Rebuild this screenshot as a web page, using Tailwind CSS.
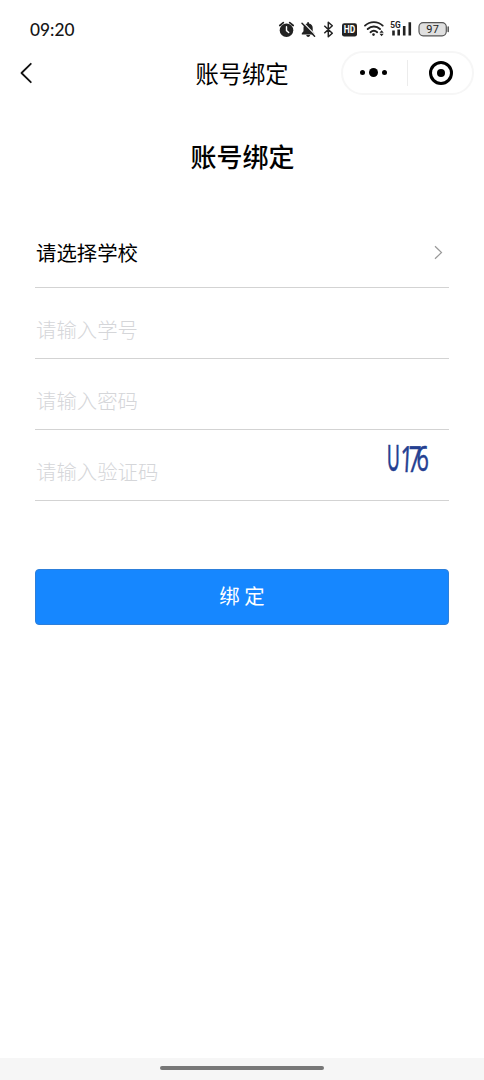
<!DOCTYPE html>
<html lang="zh-CN">
<head>
  <meta charset="UTF-8" />
  <meta name="viewport" content="width=device-width, initial-scale=1.0" />
  <title>账号绑定</title>
  <script src="https://cdn.jsdelivr.net/npm/@tailwindcss/browser@4"></script>
</head>
<body class="bg-white text-black font-['Noto_Sans_CJK_SC',sans-serif]">
  <div class="w-[484px] h-[1080px] flex flex-col overflow-hidden">

    <!-- Status bar -->
    <div class="h-[50px] pt-2 pl-[30px] pr-[34px] flex items-center justify-between shrink-0">
      <span class="pt-[2px] font-[Lato,sans-serif] font-medium text-[17.300px] leading-none text-[#151515]">09:20</span>
      <svg class="w-[172px] h-6" viewBox="278 17 172 24" fill="none">
        <!-- alarm -->
        <circle cx="286.500" cy="30.300" r="6.800" fill="#222" />
        <path d="M279.800 25.500l3.500-2.900M293.200 25.500l-3.500-2.900" stroke="#222" stroke-width="1.700" stroke-linecap="round" />
        <path d="M286.500 26.800v3.800l2.200 1.900" stroke="#fff" stroke-width="1.400" stroke-linecap="round" />
        <!-- muted bell -->
        <path d="M301.800 34.500v-1.200l1.700-2v-3.500c0-2.600 1.600-4.100 3.700-4.400v-1.200h1.800v1.200c2.200.4 3.700 2 3.700 4.400v3.500l1.700 2v1.200zM306.200 35h4c-.3 1.300-1 2-2 2s-1.700-.7-2-2z" fill="#222" />
        <path d="M303.100 22.500l12.500 12.700" stroke="#fff" stroke-width="1.100" />
        <path d="M302 23.200l12.600 13" stroke="#222" stroke-width="1.500" stroke-linecap="round" />
        <!-- bluetooth -->
        <path d="M324.300 25.700l8 7.600-4 3.500V22.300l4 3.500-8 7.400" stroke="#222" stroke-width="1.500" stroke-linejoin="round" />
        <!-- HD -->
        <rect x="342" y="23.300" width="15" height="13.200" rx="2.200" fill="#222" />
        <text x="349.500" y="33.400" text-anchor="middle" textLength="11.500" lengthAdjust="spacingAndGlyphs" font-family="Roboto" font-weight="700" font-size="10" fill="#fff">HD</text>
        <!-- wifi -->
        <path d="M365 25.600c5-4.700 12.700-4.700 17.700 0M367.700 29c3.600-3.300 8.800-3.300 12.300 0M370.500 32.200c2-1.800 4.700-1.800 6.700 0" stroke="#222" stroke-width="1.900" stroke-linecap="round" />
        <circle cx="373.500" cy="34.600" r="1.300" fill="#222" />
        <path d="M379.500 32.700l2.100-2.500 2.100 2.500zM379.500 33.800l2.100 2.500 2.100-2.500z" fill="#222" />
        <!-- signal -->
        <text x="390.300" y="28.200" textLength="10.500" lengthAdjust="spacingAndGlyphs" font-family="Roboto" font-weight="700" font-size="8.500" fill="#222">5G</text>
        <path d="M393.500 30.500v5M398.700 29.500v6M404.200 26v9.500M409.800 22.300v13.200" stroke="#222" stroke-width="2.600" />
        <!-- battery -->
        <rect x="419" y="22.600" width="27.300" height="13.200" rx="4.200" fill="#e0e0e0" stroke="#555" stroke-width="1.200" />
        <path d="M448.200 27v4.600" stroke="#555" stroke-width="1.500" stroke-linecap="round" />
        <text x="432.600" y="33.200" text-anchor="middle" textLength="12.500" font-family="Roboto" font-size="11" fill="#222">97</text>
      </svg>
    </div>

    <!-- Nav bar -->
    <div class="h-[46px] grid grid-cols-[1fr_auto_1fr] items-center pl-5 pr-[10px] shrink-0">
      <svg class="w-[14px] h-[22px]" viewBox="0 0 14 22" fill="none" stroke="#111" stroke-width="1.800" stroke-linecap="round" stroke-linejoin="round">
        <path d="M10.800 1.800L1.500 11l9.300 9.200" />
      </svg>
      <h1 class="text-[23.300px] leading-none pt-px -ml-[9px] pr-[1px]">账号绑定</h1>
      <div class="justify-self-end w-[133px] h-[44px] -mt-px rounded-full border-2 border-[#f6f6f6] flex items-center">
        <div class="w-[64px] pr-[3px] flex items-center justify-center gap-1">
          <i class="size-[5px] rounded-full bg-black"></i>
          <i class="size-[9px] rounded-full bg-black"></i>
          <i class="size-[5px] rounded-full bg-black"></i>
        </div>
        <div class="w-px h-[26px] bg-[#ececec]"></div>
        <div class="flex-1 flex items-center justify-center pl-px">
          <div class="size-6 rounded-full border-[3px] border-black flex items-center justify-center">
            <i class="size-2 rounded-full bg-black"></i>
          </div>
        </div>
      </div>
    </div>

    <!-- Form -->
    <main class="flex-1 px-[35px]">
      <h2 class="mt-[47px] pl-px text-[26px] leading-[26px] font-medium text-center">账号绑定</h2>

      <div class="mt-12 h-[71px] pl-px border-b border-[#d3d3d3] flex items-center justify-between pr-[5px]">
        <span class="text-[20.400px]">请选择学校</span>
        <svg class="w-[11px] h-[15px]" viewBox="0 0 11 15" fill="none" stroke="#999" stroke-width="1.200">
          <path d="M2 1.200l6.500 6.300L2 13.800" />
        </svg>
      </div>
      <div class="h-[71px] pt-3 pl-px border-b border-[#d3d3d3] flex items-center">
        <span class="text-[20.400px] font-light text-[#d5d6d9]">请输入学号</span>
      </div>
      <div class="h-[71px] pt-3 pl-px border-b border-[#d3d3d3] flex items-center">
        <span class="text-[20.400px] font-light text-[#d5d6d9]">请输入密码</span>
      </div>
      <div class="h-[70.500px] pl-px border-b border-[#d3d3d3] flex items-start justify-between pr-[14px]">
        <span class="pt-[26px] text-[20.400px] font-light text-[#d5d6d9]">请输入验证码</span>
        <!-- captcha -->
        <svg class="w-[56px] h-[60px]" viewBox="0 0 56 60" fill="#243f91" stroke="#243f91" stroke-width=".6" font-family="Open Sans" font-size="36">
          <text transform="translate(8 41) scale(.48 1)" font-family="Lato">U</text>
          <text transform="translate(20.500 42) skewX(-3) scale(.62 1)">1</text>
          <text transform="translate(28.500 42) skewX(-3) scale(.62 1)">7</text>
          <text transform="translate(37.500 40.500) scale(.6 .95)">6</text>
        </svg>
      </div>

      <button class="mt-[68.500px] w-full h-14 rounded-[4px] bg-[#1687ff] border border-[#2d7fda] text-white text-[20.400px] leading-none pb-1">绑 定</button>
    </main>

    <!-- Home indicator -->
    <div class="h-[22px] bg-[#f6f6f6] flex justify-center pt-2 shrink-0">
      <div class="w-[164px] h-1 rounded-full bg-[#777]"></div>
    </div>
  </div>
</body>
</html>
